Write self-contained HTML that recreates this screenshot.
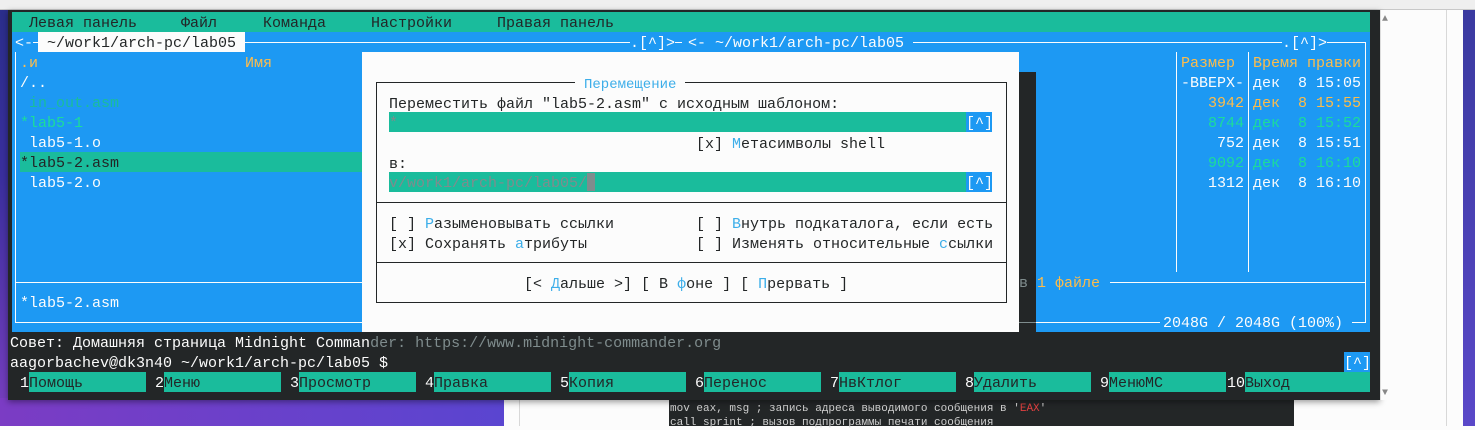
<!DOCTYPE html>
<html><head><meta charset="utf-8"><style>
*{margin:0;padding:0;box-sizing:border-box}
body{width:1475px;height:426px;overflow:hidden;position:relative;background:#fcfcfc;font-family:"Liberation Mono","DejaVu Sans Mono",monospace}
.a{position:absolute}
.t{position:absolute;white-space:pre;font-size:15px;line-height:20px;height:20px;padding-top:2px}
.w{color:#fcfcfc}.y{color:#fdbc4b}.g{color:#1cdc9a}.d{color:#232627}.b{color:#3daee9}.gr{color:#7f8c8d}
.hl{position:absolute;height:1px;background:#fcfcfc}
.vl{position:absolute;width:1px;background:#fcfcfc}
.k{position:absolute;top:372px;height:20px;background:#1abc9c}
</style></head><body>
<div class="a" style="left:0;top:0;width:1475px;height:10px;background:#efefef;border-bottom:1px solid #c8c8c8"></div>
<div class="a" style="left:0;top:10px;width:10px;height:416px;background:linear-gradient(#2b2e8c,#3a2f9e 40%,#7a3fc0)"></div>
<div class="a" style="left:0;top:398px;width:504px;height:28px;background:linear-gradient(90deg,#7b3cc4,#5a45d0)"></div>
<div class="a" style="left:504px;top:398px;width:165px;height:28px;background:#fcfcfc"></div>
<div class="a" style="left:519px;top:398px;width:1px;height:28px;background:#d8d8d8"></div>
<div class="a" style="left:669px;top:398px;width:625px;height:28px;background:#232627"></div>
<div class="a" style="left:670px;top:402px;font:11px/14px 'Liberation Mono',monospace;color:#d0d0d0;white-space:pre">mov eax, msg ; запись адреса выводимого сообщения в '<span style="color:#e04040">EAX</span>'</div>
<div class="a" style="left:670px;top:416px;font:11px/14px 'Liberation Mono',monospace;color:#d0d0d0;white-space:pre">call sprint ; вызов подпрограммы печати сообщения</div>
<div class="a" style="left:1446px;top:10px;width:1px;height:416px;background:#d8d8d8"></div>
<div class="a" style="left:1463px;top:10px;width:12px;height:416px;background:linear-gradient(#3a3aa0,#5a48c8)"></div>
<div class="a" style="left:8px;top:10px;width:1372px;height:390px;background:#232627;box-shadow:0 2px 6px rgba(0,0,0,.4)"></div>
<div class="a" style="left:1380px;top:10px;width:15px;height:390px;background:#fcfcfc;border-left:1px solid #ddd"></div>
<div class="t" style="left:1382px;top:8px;font-size:10px;color:#888">▲</div>
<div class="t" style="left:1382px;top:382px;font-size:10px;color:#888">▼</div>
<div class="a" style="left:12px;top:12px;width:1358px;height:20px;background:#1abc9c"></div>
<div class="t d" style="left:29px;top:12px">Левая панель</div>
<div class="t d" style="left:181px;top:12px">Файл</div>
<div class="t d" style="left:263px;top:12px">Команда</div>
<div class="t d" style="left:371px;top:12px">Настройки</div>
<div class="t d" style="left:497px;top:12px">Правая панель</div>
<div class="a" style="left:12px;top:32px;width:1358px;height:300px;background:#1d99f3"></div>
<div class="hl" style="left:20px;top:42px;width:662px"></div>
<div class="vl" style="left:15px;top:42px;height:280px"></div>
<div class="hl" style="left:15px;top:282px;width:347px"></div>
<div class="hl" style="left:15px;top:322px;width:347px"></div>
<div class="t w" style="left:15px;top:32px;background:#1d99f3">&lt;-</div>
<div class="t d" style="left:38px;top:32px;background:#fcfcfc;width:207px"> ~/work1/arch-pc/lab05</div>
<div class="t w" style="left:630px;top:32px;background:#1d99f3">.[^]&gt;</div>
<div class="t y" style="left:20px;top:52px">.и</div>
<div class="t y" style="left:245px;top:52px">Имя</div>
<div class="t w" style="left:20px;top:72px">/..</div>
<div class="t" style="left:20px;top:92px;color:#1abc9c"> in_out.asm</div>
<div class="t g" style="left:20px;top:112px">*lab5-1</div>
<div class="t w" style="left:20px;top:132px"> lab5-1.o</div>
<div class="a" style="left:20px;top:152px;width:342px;height:20px;background:#1abc9c"></div>
<div class="t d" style="left:20px;top:152px">*lab5-2.asm</div>
<div class="t w" style="left:20px;top:172px"> lab5-2.o</div>
<div class="t w" style="left:20px;top:292px">*lab5-2.asm</div>
<div class="hl" style="left:690px;top:42px;width:676px"></div>
<div class="vl" style="left:1365px;top:42px;height:280px"></div>
<div class="t w" style="left:688px;top:32px;background:#1d99f3">&lt;- ~/work1/arch-pc/lab05 </div>
<div class="t w" style="left:1282px;top:32px;background:#1d99f3">.[^]&gt;</div>
<div class="vl" style="left:1176px;top:52px;height:220px"></div>
<div class="vl" style="left:1248px;top:52px;height:220px"></div>
<div class="t y" style="left:1181px;top:52px">Размер</div>
<div class="t y" style="left:1253px;top:52px">Время правки</div>
<div class="t w" style="left:1181px;top:72px">-ВВЕРХ-</div><div class="t w" style="left:1253px;top:72px">дек  8 15:05</div>
<div class="t y" style="left:1208px;top:92px">3942</div><div class="t y" style="left:1253px;top:92px">дек  8 15:55</div>
<div class="t g" style="left:1208px;top:112px">8744</div><div class="t g" style="left:1253px;top:112px">дек  8 15:52</div>
<div class="t w" style="left:1217px;top:132px">752</div><div class="t w" style="left:1253px;top:132px">дек  8 15:51</div>
<div class="t g" style="left:1208px;top:152px">9092</div><div class="t g" style="left:1253px;top:152px">дек  8 16:10</div>
<div class="t w" style="left:1208px;top:172px">1312</div><div class="t w" style="left:1253px;top:172px">дек  8 16:10</div>
<div class="hl" style="left:1110px;top:282px;width:256px"></div>
<div class="hl" style="left:1036px;top:322px;width:124px"></div>
<div class="t w" style="left:1163px;top:312px">2048G / 2048G (100%)</div>
<div class="hl" style="left:1352px;top:322px;width:14px"></div>
<div class="a" style="left:1019px;top:72px;width:17px;height:260px;background:#232627"></div>
<div class="hl" style="left:1019px;top:322px;width:17px;background:#7f8c8d"></div>
<div class="t gr" style="left:1019px;top:272px">в</div>
<div class="t y" style="left:1037px;top:272px">1 файле</div>
<div class="a" style="left:362px;top:52px;width:657px;height:280px;background:#fcfcfc"></div>
<div class="a" style="left:376px;top:82px;width:631px;height:221px;border:1px solid #232627"></div>
<div class="a" style="left:376px;top:202px;width:631px;height:1px;background:#232627"></div>
<div class="a" style="left:376px;top:262px;width:631px;height:1px;background:#232627"></div>
<div class="t b" style="left:575px;top:73px;background:#fcfcfc;padding:2px 9px 0;font-size:14px">Перемещение</div>
<div class="t d" style="left:389px;top:93px">Переместить файл "lab5-2.asm" с исходным шаблоном:</div>
<div class="a" style="left:389px;top:112px;width:577px;height:20px;background:#1abc9c"></div>
<div class="t gr" style="left:389px;top:112px">*</div>
<div class="t w" style="left:966px;top:112px;background:#1d99f3;width:26px">[^]</div>
<div class="t d" style="left:696px;top:133px">[x] <span class="b">М</span>етасимволы shell</div>
<div class="t d" style="left:389px;top:153px">в:</div>
<div class="a" style="left:389px;top:172px;width:577px;height:20px;background:#1abc9c"></div>
<div class="t gr" style="left:389px;top:172px">v/work1/arch-pc/lab05/</div>
<div class="a" style="left:587px;top:173px;width:8px;height:18px;background:#7f8c8d"></div>
<div class="t w" style="left:966px;top:172px;background:#1d99f3;width:26px">[^]</div>
<div class="t d" style="left:389px;top:213px">[ ] <span class="b">Р</span>азыменовывать ссылки</div>
<div class="t d" style="left:389px;top:233px">[x] Сохранять <span class="b">а</span>трибуты</div>
<div class="t d" style="left:696px;top:213px">[ ] <span class="b">В</span>нутрь подкаталога, если есть</div>
<div class="t d" style="left:696px;top:233px">[ ] Изменять относительные <span class="b">с</span>сылки</div>
<div class="t d" style="left:524px;top:273px">[&lt; <span class="b">Д</span>альше &gt;] [ В <span class="b">ф</span>оне ] [ <span class="b">П</span>рервать ]</div>
<div class="t w" style="left:10px;top:332px">Совет: Домашняя страница Midnight Comman<span class="gr">der: https://www.midnight-commander.org</span></div>
<div class="t w" style="left:10px;top:352px">aagorbachev@dk3n40 ~/work1/arch-pc/lab05 $</div>
<div class="t w" style="left:1344px;top:352px;background:#1d99f3;width:26px">[^]</div>
<div class="t w" style="left:20px;top:372px">1</div><div class="k" style="left:29px;width:117px"></div><div class="t d" style="left:29px;top:372px">Помощь</div>
<div class="t w" style="left:155px;top:372px">2</div><div class="k" style="left:164px;width:117px"></div><div class="t d" style="left:164px;top:372px">Меню</div>
<div class="t w" style="left:290px;top:372px">3</div><div class="k" style="left:299px;width:117px"></div><div class="t d" style="left:299px;top:372px">Просмотр</div>
<div class="t w" style="left:425px;top:372px">4</div><div class="k" style="left:434px;width:117px"></div><div class="t d" style="left:434px;top:372px">Правка</div>
<div class="t w" style="left:560px;top:372px">5</div><div class="k" style="left:569px;width:117px"></div><div class="t d" style="left:569px;top:372px">Копия</div>
<div class="t w" style="left:695px;top:372px">6</div><div class="k" style="left:704px;width:117px"></div><div class="t d" style="left:704px;top:372px">Перенос</div>
<div class="t w" style="left:830px;top:372px">7</div><div class="k" style="left:839px;width:117px"></div><div class="t d" style="left:839px;top:372px">НвКтлог</div>
<div class="t w" style="left:965px;top:372px">8</div><div class="k" style="left:974px;width:117px"></div><div class="t d" style="left:974px;top:372px">Удалить</div>
<div class="t w" style="left:1100px;top:372px">9</div><div class="k" style="left:1109px;width:117px"></div><div class="t d" style="left:1109px;top:372px">МенюMC</div>
<div class="t w" style="left:1227px;top:372px">10</div><div class="k" style="left:1245px;width:125px"></div><div class="t d" style="left:1245px;top:372px">Выход</div>
</body></html>
